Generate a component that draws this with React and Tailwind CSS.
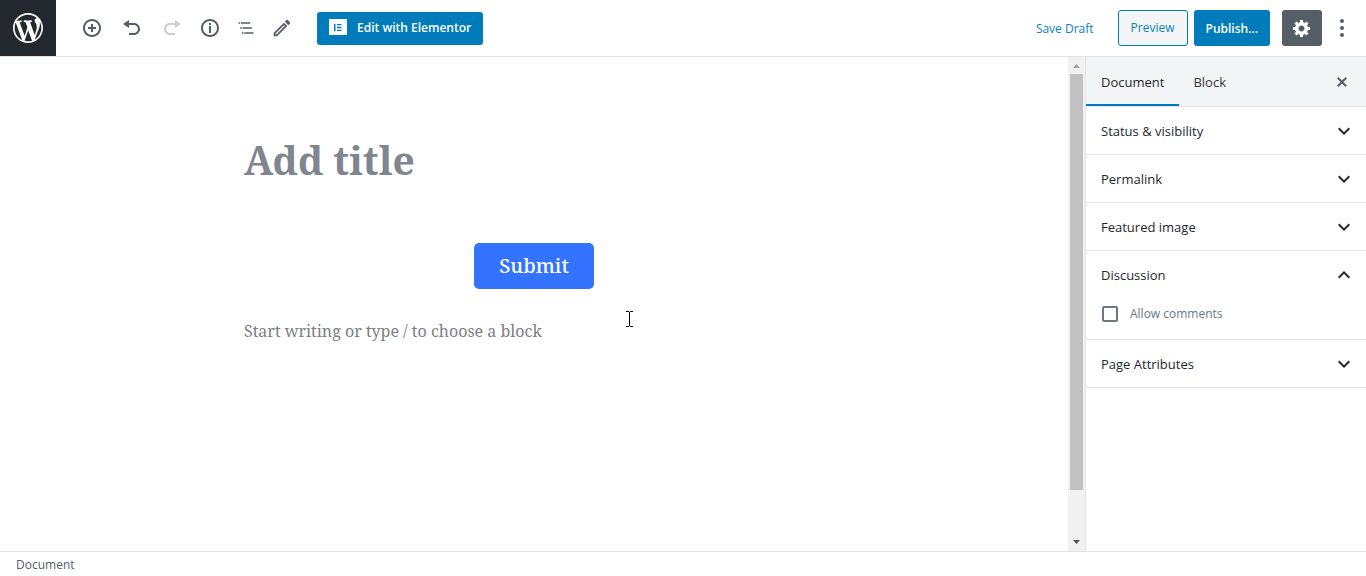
import { useState } from "react";

const Icon = ({ d, size = 20, box = 20, className = "" }) => {
  return (
    <svg
      width={size}
      height={size}
      viewBox={`0 0 ${box} ${box}`}
      fill="currentColor"
      aria-hidden="true"
      className={className}>
      <path fillRule="evenodd" d={d} />
    </svg>
  );
};

const icons = {
  wordpress:
    "M20 10c0-5.51-4.49-10-10-10C4.48 0 0 4.49 0 10c0 5.52 4.48 10 10 10 5.51 0 10-4.48 10-10zM7.78 15.37L4.37 6.22c.55-.02 1.17-.08 1.17-.08.5-.06.44-1.13-.06-1.11 0 0-1.45.11-2.37.11-.18 0-.37 0-.58-.01C4.12 2.69 6.87 1.11 10 1.11c2.33 0 4.45.87 6.05 2.34-.68-.11-1.65.39-1.65 1.58 0 .74.45 1.36.9 2.1.35.61.55 1.36.55 2.46 0 1.49-1.4 5-1.4 5l-3.03-8.37c.54-.02.82-.17.82-.17.5-.05.44-1.25-.06-1.22 0 0-1.44.12-2.38.12-.87 0-2.33-.12-2.33-.12-.5-.03-.56 1.2-.06 1.22l.92.08 1.26 3.41zM17.41 10c.24-.64.74-1.87.43-4.25.7 1.29 1.05 2.71 1.05 4.25 0 3.29-1.73 6.24-4.4 7.78.97-2.59 1.94-5.2 2.92-7.78zM6.1 18.09C3.12 16.65 1.11 13.53 1.11 10c0-1.3.23-2.48.72-3.59C3.25 10.3 4.67 14.2 6.1 18.09zm4.03-6.63l2.58 6.98c-.86.29-1.76.45-2.71.45-.79 0-1.57-.11-2.29-.33.81-2.38 1.62-4.74 2.42-7.1z",
  add: "M10 1c-5 0-9 4-9 9s4 9 9 9 9-4 9-9-4-9-9-9zm0 16c-3.9 0-7-3.1-7-7s3.1-7 7-7 7 3.1 7 7-3.1 7-7 7zm1-11H9v3H6v2h3v3h2v-3h3V9h-3V6z",
  undo: "M12 5H7V2L1 6l6 4V7h5c2.2 0 4 1.8 4 4s-1.8 4-4 4H7v2h5c3.3 0 6-2.7 6-6s-2.7-6-6-6z",
  redo: "M8 5h5V2l6 4-6 4V7H8c-2.2 0-4 1.8-4 4s1.8 4 4 4h5v2H8c-3.3 0-6-2.7-6-6s2.7-6 6-6z",
  info: "M10 1c-5 0-9 4-9 9s4 9 9 9 9-4 9-9-4-9-9-9zm0 16c-3.9 0-7-3.1-7-7s3.1-7 7-7 7 3.1 7 7-3.1 7-7 7zM9 5h2v2H9zM9 8h2v7H9z",
  outline:
    "M5 5H3v2h2V5zm3 8h11v-2H8v2zm9-8H6v2h11V5zM7 11H5v2h2v-2zm0 8h2v-2H7v2zm3-2v2h11v-2H10z",
  edit: "M14.06 9.02l.92.92L5.92 19H5v-.92l9.06-9.06M17.66 3c-.25 0-.51.1-.7.29l-1.83 1.83 3.75 3.75 1.83-1.83c.39-.39.39-1.02 0-1.41l-2.34-2.34c-.2-.2-.45-.29-.71-.29zm-3.6 3.19L3 17.25V21h3.75L17.81 9.94l-3.75-3.75z",
  gear: "M18 12h-2.18c-.17.7-.44 1.35-.81 1.93l1.54 1.54-2.1 2.1-1.54-1.54c-.58.36-1.23.63-1.91.79V19H8v-2.18c-.68-.16-1.33-.43-1.91-.79l-1.54 1.54-2.12-2.12 1.54-1.54c-.36-.58-.63-1.23-.79-1.91H1V9.03h2.17c.16-.7.44-1.35.8-1.94L2.43 5.55l2.1-2.1 1.54 1.54c.58-.37 1.24-.64 1.93-.81V2h3v2.18c.68.16 1.33.43 1.91.79l1.54-1.54 2.12 2.12-1.54 1.54c.36.59.64 1.24.8 1.94H18V12zm-8.5 1.5c1.66 0 3-1.34 3-3s-1.34-3-3-3-3 1.34-3 3 1.34 3 3 3z",
  more: "M10 1a2 2 0 100 4 2 2 0 000-4zM10 8a2 2 0 100 4 2 2 0 000-4zM10 15a2 2 0 100 4 2 2 0 000-4z",
  close:
    "M14.95 6.46L11.41 10l3.54 3.54-1.41 1.41L10 11.42l-3.53 3.53-1.42-1.42L8.58 10 5.05 6.47l1.42-1.42L10 8.58l3.54-3.53z",
  down: "M7.41 8.59L12 13.17l4.59-4.58L18 10l-6 6-6-6z",
  up: "M7.41 15.41L12 10.83l4.59 4.58L18 14l-6-6-6 6z",
  elementor:
    "M0 0h18v16H0zM5 5v7h1.5V5zM8 5v1.3h4.5V5zM8 7.8v1.4h4.5V7.8zM8 10.7v1.3h4.5v-1.3z",
};

const tools = [
  { label: "Add block", icon: "add", className: "mr-1" },
  { label: "Undo", icon: "undo", className: "mr-1" },
  { label: "Redo", icon: "redo", className: "mr-0.5", disabled: true },
  { label: "Content structure", icon: "info" },
  { label: "Block navigation", icon: "outline", box: 24 },
  { label: "Tools", icon: "edit", box: 24, size: 22 },
];

const panels = [
  "Status & visibility",
  "Permalink",
  "Featured image",
  "Discussion",
  "Page Attributes",
];

const Header = () => {
  return (
    <header className="flex shrink-0 items-center border-b border-[#e2e4e7] bg-white text-xs">
      <a
        href="#"
        aria-label="View Pages"
        className="flex h-14 w-14 items-center justify-center bg-[#23282e] text-white">
        <Icon d={icons.wordpress} size={30} />
      </a>

      <div className="ml-[18px] flex">
        {tools.map((tool) => (
          <button
            key={tool.label}
            aria-label={tool.label}
            disabled={tool.disabled}
            className={`flex h-9 w-9 items-center justify-center text-[#555d66] disabled:text-[#ccced1] ${tool.className || ""}`}>
            <Icon d={icons[tool.icon]} box={tool.box} size={tool.size} />
          </button>
        ))}
      </div>

      <button className="ml-[17px] flex h-[33px] items-center gap-2.5 rounded-[3px] bg-[#007cba] px-3 font-semibold text-white">
        <svg
          width="18"
          height="16"
          viewBox="0 0 18 16"
          fill="currentColor"
          aria-hidden="true"
          className="mb-0.5">
          <path fillRule="evenodd" d={icons.elementor} />
        </svg>
        Edit with Elementor
      </button>

      <div className="ml-auto flex items-center pr-3.5">
        <button className="mr-6 pt-0.5 text-[#0a84bf]">Save Draft</button>
        <button className="mr-1.5 h-9 rounded-[3px] border border-[#007cba] bg-[#f3f5f6] px-3 text-[#0a84bf]">
          Preview
        </button>
        <button className="mr-3 h-9 rounded-[3px] bg-[#007cba] px-3 pt-0.5 font-semibold text-white">
          Publish...
        </button>
        <button
          aria-label="Settings"
          className="flex h-9 w-10 items-center justify-center rounded-[3px] bg-[#555d66] text-white">
          <Icon d={icons.gear} />
        </button>
        <button
          aria-label="More"
          className="ml-2.5 flex h-9 w-5 items-center justify-center text-[#555d66]">
          <Icon d={icons.more} />
        </button>
      </div>
    </header>
  );
};

const Editor = () => {
  return (
    <main className="relative min-w-0 flex-1 font-['Noto_Serif','DejaVu_Serif',serif]">
      <div className="mx-auto flex max-w-[580px] flex-col pt-[70px]">
        <input
          aria-label="Add title"
          placeholder="Add title"
          className="h-16 w-full text-[39px] font-bold outline-none placeholder:text-[#80868f]"
        />
        <button className="mt-[52px] h-[46px] self-center rounded-[5px] bg-[#3373ff] px-[25px] text-xl font-medium text-white">
          Submit
        </button>
        <input
          aria-label="Empty block"
          placeholder="Start writing or type / to choose a block"
          className="mt-7 h-7 w-full text-base outline-none placeholder:text-[#7c7f83]"
        />
      </div>

      {/* text cursor */}
      <svg
        width="7"
        height="16"
        viewBox="0 0 7 16"
        stroke="#000"
        fill="none"
        shapeRendering="crispEdges"
        aria-hidden="true"
        className="absolute top-[254px] left-1/2 ml-[92px]">
        <path d="M0 .5H3M4 .5H7M3.5 1V15M0 15.5H3M4 15.5H7" />
      </svg>
    </main>
  );
};

const Scrollbar = () => {
  return (
    <div
      aria-hidden="true"
      className="flex w-[17px] shrink-0 flex-col items-center bg-[#f1f1f1]">
      <svg width="17" height="17" viewBox="0 0 17 17" fill="#a3a3a3">
        <path d="M5 11h7L8.5 7z" />
      </svg>
      <div className="w-[13px] flex-[416] bg-[#c1c1c1]"></div>
      <div className="flex-[44]"></div>
      <svg width="17" height="17" viewBox="0 0 17 17" fill="#505050">
        <path d="M5 6h7l-3.5 4z" />
      </svg>
    </div>
  );
};

const Sidebar = () => {
  const [open, setOpen] = useState("Discussion");

  return (
    <aside className="w-[281px] shrink-0 border-l border-[#e2e4e7] text-[#23282e]">
      <div className="flex h-[50px] border-b border-[#e2e4e7] bg-[#f3f4f5]">
        <button className="border-b-2 border-[#007cba] px-[15px] pt-1 font-medium">
          Document
        </button>
        <button className="px-3.5 pt-0.5 text-[#32373c]">Block</button>
        <button
          aria-label="Close settings"
          className="mr-3.5 ml-auto text-[#555d66]">
          <Icon d={icons.close} />
        </button>
      </div>

      {panels.map((panel) => (
        <section key={panel} className="border-b border-[#e2e4e7]">
          <button
            aria-expanded={open === panel}
            onClick={() => setOpen(open === panel ? "" : panel)}
            className="flex h-[47px] w-full items-center justify-between pr-2.5 pl-[15px] font-medium">
            <span className="pt-0.5">{panel}</span>
            <Icon d={open === panel ? icons.up : icons.down} size={24} box={24} />
          </button>
          {panel === "Discussion" && open === panel && (
            <label className="flex h-[41px] items-start gap-3 pl-4 text-xs leading-4 text-[#6c7781]">
              <input
                type="checkbox"
                className="mt-2 h-4 w-4 appearance-none rounded-xs border-2 border-[#6c7781] checked:bg-[#11a0d2]"
              />
              <span className="mt-2">Allow comments</span>
            </label>
          )}
        </section>
      ))}
    </aside>
  );
};

const App = () => {
  return (
    <div className="flex h-screen flex-col bg-white font-['Open_Sans',sans-serif] text-[13px]">
      <Header />
      <div className="flex min-h-0 flex-1">
        <Editor />
        <Scrollbar />
        <Sidebar />
      </div>
      <footer className="flex h-[25px] shrink-0 items-center border-t border-[#e2e4e7] px-4 pt-0.5 text-xs text-[#555d66]">
        Document
      </footer>
    </div>
  );
};

export default App;
